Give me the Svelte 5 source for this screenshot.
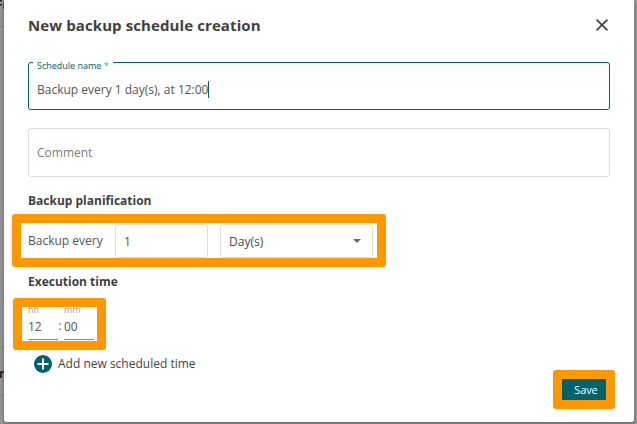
<script>
  let name = $state('Backup every 1 day(s), at 12:00');
  let every = $state('1');
  let unit = $state('Day(s)');
  const time = [
    { label: 'hh', value: '12' },
    { label: 'mm', value: '00' }
  ];
</script>

<div class="page">
  <span class="behind top">Fr</span>
  <span class="behind low">n</span>
  <i class="rule r1"></i>
  <i class="rule r2"></i>
  <i class="rule r3"></i>
  <section class="dialog">
    <header>
      <h1>New backup schedule creation</h1>
      <button class="close" aria-label="Close">
        <svg width="14" height="14" viewBox="0 0 14 14"><path d="M1.6 1.6 12.4 12.4M12.4 1.6 1.6 12.4" stroke="#3a3a3a" stroke-width="1.5" fill="none" /></svg>
      </button>
    </header>

    <div class="field focused">
      <span class="legend">Schedule name <b>*</b></span>
      <span class="value">{name}</span><span class="caret"></span>
    </div>
    <div class="field comment"><span>Comment</span></div>

    <h2 class="plan">Backup planification</h2>
    <div class="every">
      <span class="label">Backup every</span>
      <div class="box count">{every}</div>
      <div class="box unit">
        <span>{unit}</span>
        <svg width="8" height="4" viewBox="0 0 8 4"><path d="M0 0h8L4 4z" fill="#6b6b6b" /></svg>
      </div>
      <div class="mark m1"></div>
    </div>

    <h2 class="exec">Execution time</h2>
    <div class="time">
      {#each time as part, i}
        {#if i}<span class="colon">:</span>{/if}
        <div class="part">
          <small>{part.label}</small>
          <span>{part.value}</span>
        </div>
      {/each}
      <div class="mark m2"></div>
    </div>

    <div class="add">
      <svg width="18" height="18" viewBox="0 0 18 18"><circle cx="9" cy="9" r="9" fill="#00626a" /><path d="M9 3.5v11M3.5 9h11" stroke="#fff" stroke-width="2" /></svg>
      <span>Add new scheduled time</span>
    </div>

    <footer>
      <button class="save">Save<span class="mark m3"></span></button>
    </footer>
  </section>
</div>

<style>
  :global(body) { margin: 0; overflow: hidden; }
  .page {
    position: relative;
    box-sizing: border-box;
    width: 637px;
    height: 424px;
    padding: 0 3px 2px 4px;
    overflow: hidden;
    background: #9c9c9c;
    font-family: "Open Sans", "Noto Sans", sans-serif;
    font-size: 12px;
    color: #555;
  }
  .behind { position: absolute; font-weight: 700; font-size: 12px; line-height: 16px; color: #222; }
  .top { left: -4px; top: -3px; }
  .low { left: -1px; top: 366px; }
  .rule { position: absolute; left: 0; width: 4px; height: 1px; background: #868686; }
  .r1 { top: 26px; }
  .r2 { top: 347px; }
  .r3 { top: 395px; }
  .dialog {
    position: relative;
    box-sizing: border-box;
    height: 422px;
    padding: 0 24px;
    background: #fff;
    border-radius: 0 0 3px 3px;
    box-shadow: 0 2px 5px 1px rgba(0, 0, 0, .3);
  }
  header { display: flex; justify-content: space-between; align-items: center; padding-top: 13px; height: 24px; }
  h1 { margin: 0; font-size: 15px; line-height: 24px; font-weight: 700; letter-spacing: .1px; color: #3f3f3f; white-space: nowrap; }
  button { border: 0; padding: 0; margin: 0; background: none; font: inherit; }
  .close { display: flex; margin-right: 1px; }
  .field {
    position: relative;
    display: flex;
    align-items: center;
    box-sizing: border-box;
    width: 582px;
    height: 49px;
    padding: 0 8px;
    border: 1px solid #dedede;
    border-radius: 3px;
    white-space: nowrap;
  }
  .focused { margin-top: 25px; height: 48px; border-color: #00626a; padding-top: 6px; }
  .legend {
    position: absolute;
    left: 4px;
    top: -4px;
    box-sizing: border-box;
    width: 80px;
    padding-left: 4px;
    background: #fff;
    font-size: 9px;
    line-height: 14px;
    color: #00626a;
  }
  .legend b { font-weight: 400; color: #15a8a0; }
  .caret { width: 1px; height: 17px; background: #00626a; }
  .comment { margin-top: 18px; color: #7c7c7c; }
  h2 { margin: 0; font-size: 12px; line-height: 18px; height: 18px; font-weight: 700; color: #3f3f3f; }
  .plan { margin-top: 15px; }
  .every { position: relative; display: flex; align-items: center; height: 34px; margin-top: 14px; }
  .label { width: 87px; padding-bottom: 2px; }
  .box {
    box-sizing: border-box;
    display: flex;
    align-items: center;
    height: 34px;
    padding: 0 8px;
    border: 1px solid #dedede;
    border-radius: 3px;
  }
  .count { width: 93px; }
  .unit { width: 153px; margin-left: 12px; justify-content: space-between; padding-right: 11px; color: #484848; }
  .unit svg { margin-top: -1px; }
  .mark { position: absolute; box-sizing: border-box; border: 9px solid #ff9800; border-radius: 3px; }
  .m1 { left: -16px; top: -10px; width: 374px; height: 53px; }
  .exec { margin-top: 15px; }
  .time { position: relative; display: flex; height: 36px; margin-top: 14px; }
  .part { width: 30px; height: 34px; border-bottom: 1px solid #8a8a8a; }
  .part small { display: block; height: 13px; font-size: 9px; line-height: 9px; color: #999; }
  .part span { display: block; line-height: 18px; }
  .colon { width: 6px; padding-top: 12px; text-align: center; line-height: 18px; text-indent: -2px; }
  .m2 { left: -15px; top: -7px; width: 93px; height: 52px; }
  .add { display: flex; align-items: center; height: 18px; margin: 14px 0 0 6px; color: #444; }
  .add span { margin-left: 6px; padding-bottom: 2px; }
  footer { display: flex; justify-content: flex-end; margin-top: 6px; }
  .save { position: relative; width: 44px; height: 21px; margin-right: 4px; padding-left: 4px; background: #00626a; color: #fff; font-size: 11px; line-height: 21px; text-align: center; letter-spacing: -.1px; }
  .m3 { left: -9px; top: -9px; width: 62px; height: 39px; }
</style>
